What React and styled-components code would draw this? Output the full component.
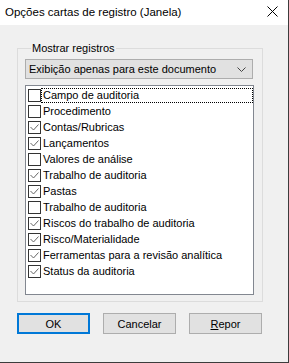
import styled, { createGlobalStyle } from "styled-components";

const GlobalStyle = createGlobalStyle`
  html, body { margin: 0; padding: 0; background: #3c3c3c; }
  body { font-family: "Liberation Sans", Arial, sans-serif; }
`;

const items = [
  { label: "Campo de auditoria", checked: false, focused: true },
  { label: "Procedimento", checked: false },
  { label: "Contas/Rubricas", checked: true },
  { label: "Lançamentos", checked: true },
  { label: "Valores de análise", checked: false },
  { label: "Trabalho de auditoria", checked: true },
  { label: "Pastas", checked: true },
  { label: "Trabalho de auditoria", checked: false },
  { label: "Riscos do trabalho de auditoria", checked: true },
  { label: "Risco/Materialidade", checked: true },
  { label: "Ferramentas para a revisão analítica", checked: true },
  { label: "Status da auditoria", checked: true },
];

export default function App() {
  return (
    <>
      <GlobalStyle />
      <Window>
        <TitleBar>
          <Title>Opções cartas de registro (Janela)</Title>
          <CloseBtn>
            <svg width="11" height="11" viewBox="0 0 11 11">
              <path d="M0.5 0.5 L10.5 10.5 M10.5 0.5 L0.5 10.5" stroke="#000" strokeWidth="1" />
            </svg>
          </CloseBtn>
        </TitleBar>
        <Body>
          <Group>
            <Legend>Mostrar registros</Legend>
            <Combo>
              <span>Exibição apenas para este documento</span>
              <svg width="9" height="5" viewBox="0 0 9 5">
                <path d="M0.5 0.5 L4.5 4.5 L8.5 0.5" fill="none" stroke="#444" strokeWidth="1" />
              </svg>
            </Combo>
            <List>
              {items.map((item, i) => (
                <Row key={i}>
                  <Box>
                    {item.checked && (
                      <svg width="11" height="11" viewBox="0 0 11 11">
                        <path d="M1.5 5 L4.5 8 L9.5 2.5" fill="none" stroke="#666" strokeWidth="1" />
                      </svg>
                    )}
                  </Box>
                  <Label $focused={item.focused}>{item.label}</Label>
                </Row>
              ))}
            </List>
          </Group>
          <Buttons>
            <Button $default>OK</Button>
            <Button>Cancelar</Button>
            <Button><u>R</u>epor</Button>
          </Buttons>
        </Body>
      </Window>
    </>
  );
}

const Window = styled.div`
  width: 288px;
  height: 362px;
  background: #f0f0f0;
  display: flex;
  flex-direction: column;
  font-size: 11px;
  color: #000;
`;

const TitleBar = styled.div`
  height: 25px;
  background: #fff;
  display: flex;
  align-items: center;
  justify-content: space-between;
  padding: 0 10px 0 5px;
`;

const Title = styled.div`
  font-family: "Liberation Sans", Arial, sans-serif;
  font-size: 11.5px;
  margin-top: -2px;
`;

const CloseBtn = styled.div`
  display: flex;
  margin-top: -2px;
`;

const Body = styled.div`
  padding: 17px 0 0 17px;
  display: flex;
  flex-direction: column;
`;

const Group = styled.fieldset`
  margin: 0;
  width: 246px;
  box-sizing: border-box;
  border: 1px solid #dcdcdc;
  padding: 4px 0 6px 7px;
`;

const Legend = styled.legend`
  padding: 0 1px;
  margin-left: 6px;
  line-height: 13px;
`;

const Combo = styled.div`
  width: 228px;
  height: 20px;
  box-sizing: border-box;
  border: 1px solid #adadad;
  background: #e1e1e1;
  display: flex;
  align-items: center;
  justify-content: space-between;
  padding: 0 6px 0 3px;
  svg { margin-top: 1px; }
`;

const List = styled.div`
  margin-top: 6px;
  width: 229px;
  height: 210px;
  box-sizing: border-box;
  border: 1px solid #828790;
  background: #fff;
  padding: 1px 0 0 2px;
`;

const Row = styled.div`
  display: flex;
  align-items: center;
  height: 16px;
`;

const Box = styled.div`
  width: 13px;
  height: 13px;
  box-sizing: border-box;
  border: 1px solid #333;
  background: #fff;
  display: flex;
  flex-shrink: 0;
`;

const Label = styled.div`
  flex: 1;
  line-height: 13px;
  padding-left: 1px;
  border: 1px dotted ${({ $focused }) => ($focused ? "#000" : "transparent")};
  white-space: nowrap;
`;

const Buttons = styled.div`
  display: flex;
  gap: 13px;
  margin-top: 11px;
`;

const Button = styled.div`
  width: 73px;
  height: 21px;
  box-sizing: border-box;
  display: flex;
  align-items: center;
  justify-content: center;
  background: #e1e1e1;
  border: ${({ $default }) => ($default ? "2px solid #0078d7" : "1px solid #adadad")};
`;
